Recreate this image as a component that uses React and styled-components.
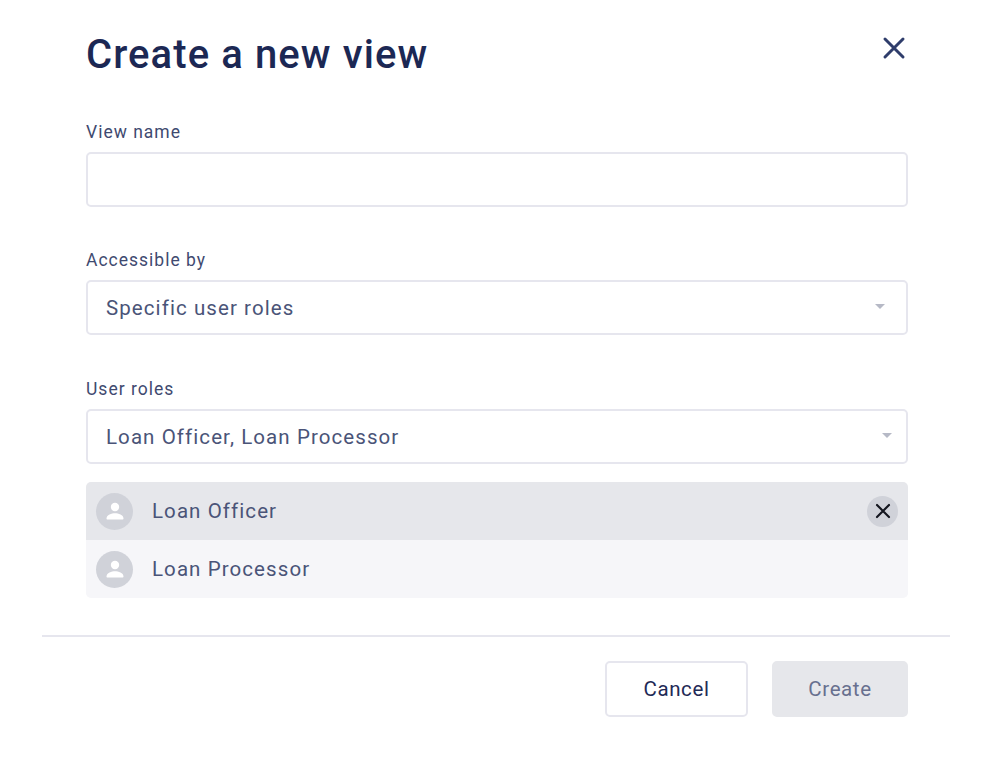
import styled, { createGlobalStyle } from "styled-components";

const GlobalStyle = createGlobalStyle`
  html, body {
    margin: 0;
    padding: 0;
    background: #fff;
    font-family: Roboto, "Liberation Sans", sans-serif;
  }
`

function CloseIcon({size = 24, color = "#2f3d6b", weight = 3}) {
    return (
        <svg width={size} height={size} viewBox="0 0 24 24" fill="none" stroke={color} strokeWidth={weight} strokeLinecap="round">
            <path d="M3 3L21 21M21 3L3 21"/>
        </svg>
    )
}

function PersonIcon() {
    return (
        <svg width="20" height="20" viewBox="0 0 20 20" fill="#fff">
            <circle cx="10" cy="6" r="4.2"/>
            <path d="M1.5 17.5c0-3.6 5.2-5.2 8.5-5.2s8.5 1.6 8.5 5.2c0 .6-.4 1-1 1h-15c-.6 0-1-.4-1-1z"/>
        </svg>
    )
}

export default function App() {
    return (
        <Modal>
            <GlobalStyle/>
            <Body>
                <Header>
                    <Title>Create a new view</Title>
                    <CloseButton><CloseIcon/></CloseButton>
                </Header>

                <Field $gap={41}>
                    <Label>View name</Label>
                    <Input/>
                </Field>

                <Field $gap={42}>
                    <Label>Accessible by</Label>
                    <Select $caretRight={21}>
                        Specific user roles
                        <Caret/>
                    </Select>
                </Field>

                <Field $gap={18}>
                    <Label>User roles</Label>
                    <Select $caretRight={14}>
                        Loan Officer, Loan Processor
                        <Caret/>
                    </Select>
                </Field>

                <RoleList>
                    <Role $active>
                        <Avatar><PersonIcon/></Avatar>
                        <RoleName>Loan Officer</RoleName>
                        <RemoveButton><CloseIcon size={16} color="#14161f" weight={3.2}/></RemoveButton>
                    </Role>
                    <Role>
                        <Avatar><PersonIcon/></Avatar>
                        <RoleName>Loan Processor</RoleName>
                    </Role>
                </RoleList>
            </Body>

            <Footer>
                <CancelButton>Cancel</CancelButton>
                <CreateButton>Create</CreateButton>
            </Footer>
        </Modal>
    )
}

const Modal = styled.div`
  width: 908px;
  height: 764px;
  margin-left: 42px;
  box-sizing: border-box;
`
const Body = styled.div`
  padding: 31px 42px 37px 44px;
  border-bottom: 2px solid #e6e6ee;
`
const Header = styled.div`
  display: flex;
  justify-content: space-between;
  align-items: flex-start;
  height: 89px;
`
const Title = styled.h1`
  margin: 0;
  font-size: 40px;
  line-height: 48px;
  font-weight: 500;
  letter-spacing: 1.1px;
  color: #1c2854;
`
const CloseButton = styled.div`
  display: flex;
  margin: 5px 2px 0 0;
`
const Field = styled.div`
  display: flex;
  flex-direction: column;
  margin-bottom: ${p => p.$gap}px;
`
const Label = styled.label`
  font-size: 17.5px;
  line-height: 24px;
  letter-spacing: 1px;
  color: #3f4a70;
  margin-bottom: 8px;
`
const Input = styled.div`
  height: 55px;
  box-sizing: border-box;
  border: 2px solid #e6e6ee;
  border-radius: 5px;
  background: #fff;
`
const Select = styled(Input)`
  display: flex;
  align-items: center;
  justify-content: space-between;
  padding: 0 ${p => p.$caretRight}px 0 18px;
  font-size: 20.5px;
  letter-spacing: 1.08px;
  color: #4a5478;
`
const Caret = styled.span`
  width: 0;
  height: 0;
  border-left: 5px solid transparent;
  border-right: 5px solid transparent;
  border-top: 5px solid #b6b9c6;
  margin-top: -3px;
`
const RoleList = styled.div`
  border-radius: 5px;
  overflow: hidden;
`
const Role = styled.div`
  display: flex;
  align-items: center;
  height: 58px;
  padding: 0 10px 0 10px;
  background: ${p => p.$active ? "#e6e7eb" : "#f6f6f9"};
`
const Avatar = styled.div`
  width: 37px;
  height: 37px;
  border-radius: 50%;
  background: #d0d2d9;
  display: flex;
  align-items: center;
  justify-content: center;
  flex-shrink: 0;
`
const RoleName = styled.span`
  flex: 1;
  margin-left: 19px;
  font-size: 20.5px;
  letter-spacing: 1.08px;
  color: #4a5478;
`
const RemoveButton = styled.div`
  width: 31px;
  height: 31px;
  border-radius: 50%;
  background: #d0d2d9;
  display: flex;
  align-items: center;
  justify-content: center;
`
const Footer = styled.div`
  display: flex;
  justify-content: flex-end;
  gap: 24px;
  padding: 24px 42px 0 0;
`
const CancelButton = styled.div`
  width: 143px;
  height: 56px;
  box-sizing: border-box;
  border: 2px solid #e6e6ee;
  border-radius: 5px;
  display: flex;
  align-items: center;
  justify-content: center;
  font-size: 20.5px;
  letter-spacing: 0.6px;
  color: #1f2a56;
`
const CreateButton = styled(CancelButton)`
  width: 136px;
  background: #e6e7eb;
  border-color: #e6e7eb;
  color: #68708f;
`
